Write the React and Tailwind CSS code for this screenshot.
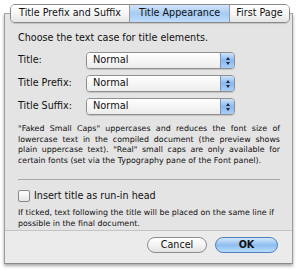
import React from 'react';

const font = { fontFamily: '"DejaVu Sans", "Liberation Sans", sans-serif' };

function Popup({ value }) {
  return (
    <div className="flex h-[17px] w-[149px] overflow-hidden rounded-[4px] border border-[#8f8f8f] shadow-[0_1px_1px_rgba(0,0,0,0.15)]">
      <div className="flex flex-1 items-center bg-gradient-to-b from-white to-[#ececec] pl-[6px] text-[9.8px] text-[#111]">
        {value}
      </div>
      <div className="flex w-[14px] flex-col items-center justify-center gap-[2px] border-l border-[#6f95c4] bg-gradient-to-b from-[#cfe3f9] via-[#8ab8ec] to-[#a9cff7]">
        <span className="h-0 w-0 border-x-[2.5px] border-b-[3px] border-x-transparent border-b-[#1b2a3c]" />
        <span className="h-0 w-0 border-x-[2.5px] border-t-[3px] border-x-transparent border-t-[#1b2a3c]" />
      </div>
    </div>
  );
}

function Row({ label }) {
  return (
    <div className="flex h-[23px] items-center">
      <span className="w-[68px] text-[9.6px] text-[#111]">{label}</span>
      <Popup value="Normal" />
    </div>
  );
}

export default function App() {
  const tabs = [
    { label: 'Title Prefix and Suffix', w: 'w-[118px]' },
    { label: 'Title Appearance', w: 'w-[100px]', active: true },
    { label: 'First Page', w: 'flex-1' },
  ];

  return (
    <div className="relative h-[271px] w-[300px] bg-white pl-[4px] pt-[13px]" style={font}>
      <div className="flex h-[251px] w-[289px] flex-col border border-t-[#a5a5a5] border-x-[#9c9c9c] border-b-[#8a8a8a] bg-[#e4e4e4] shadow-[0_2px_3px_rgba(0,0,0,0.35)]">
        <div className="flex h-[217px] flex-col border-b border-[#c4c4c4] px-[13px] pt-[17px]">
          <p className="text-[9.6px] leading-[14px] text-[#111]">Choose the text case for title elements.</p>
          <div className="mt-[4px] flex flex-col">
            <Row label="Title:" />
            <Row label="Title Prefix:" />
            <Row label="Title Suffix:" />
          </div>
          <p className="mt-[6px] w-[262px] text-justify text-[7.9px] leading-[10.7px] text-[#111]">
            "Faked Small Caps" uppercases and reduces the font size of lowercase text in the compiled document (the preview shows plain uppercase text). "Real" small caps are only available for certain fonts (set via the Typography pane of the Font panel).
          </p>
          <div className="mt-[12px] h-px w-[262px] bg-[#a8a8a8]" />
          <label className="mt-[9px] flex items-center gap-[4px]">
            <span className="h-[12px] w-[12px] rounded-[2px] border border-[#8a8a8a] bg-gradient-to-b from-white to-[#e6e6e6]" />
            <span className="text-[9.6px] text-[#111]">Insert title as run-in head</span>
          </label>
          <p className="mt-[4px] text-[7.9px] leading-[11px] text-[#111]">
            If ticked, text following the title will be placed on the same line if possible in the final document.
          </p>
        </div>
        <div className="flex flex-1 items-start justify-end gap-[8px] bg-[#ebebeb] pr-[14px] pt-[6px]">
          <button className="h-[16px] w-[60px] rounded-full border border-[#8c8c8c] bg-gradient-to-b from-white via-[#f4f4f4] to-[#e2e2e2] text-[9.6px] leading-[14px] text-[#111]">
            Cancel
          </button>
          <button className="h-[16px] w-[63px] rounded-full border border-[#4f7fbd] bg-gradient-to-b from-[#d6e8fb] via-[#8dbdf0] to-[#b9dcfb] text-[9.6px] leading-[14px] font-semibold text-[#111]">
            OK
          </button>
        </div>
      </div>

      <div className="absolute left-[10px] top-[4px] flex h-[19px] w-[280px] overflow-hidden rounded-[5px] border border-[#8a8a8a] shadow-[0_1px_1px_rgba(0,0,0,0.15)]">
        {tabs.map((t, i) => (
          <div
            key={t.label}
            className={`${t.w} flex items-center justify-center text-[9.6px] text-[#111] ${i > 0 ? 'border-l border-[#9a9a9a]' : ''} ${
              t.active
                ? 'bg-gradient-to-b from-[#d3e6fb] via-[#a5cbf3] to-[#bfdcfa]'
                : 'bg-gradient-to-b from-white via-[#f6f6f6] to-[#e4e4e4]'
            }`}
          >
            {t.label}
          </div>
        ))}
      </div>
    </div>
  );
}
